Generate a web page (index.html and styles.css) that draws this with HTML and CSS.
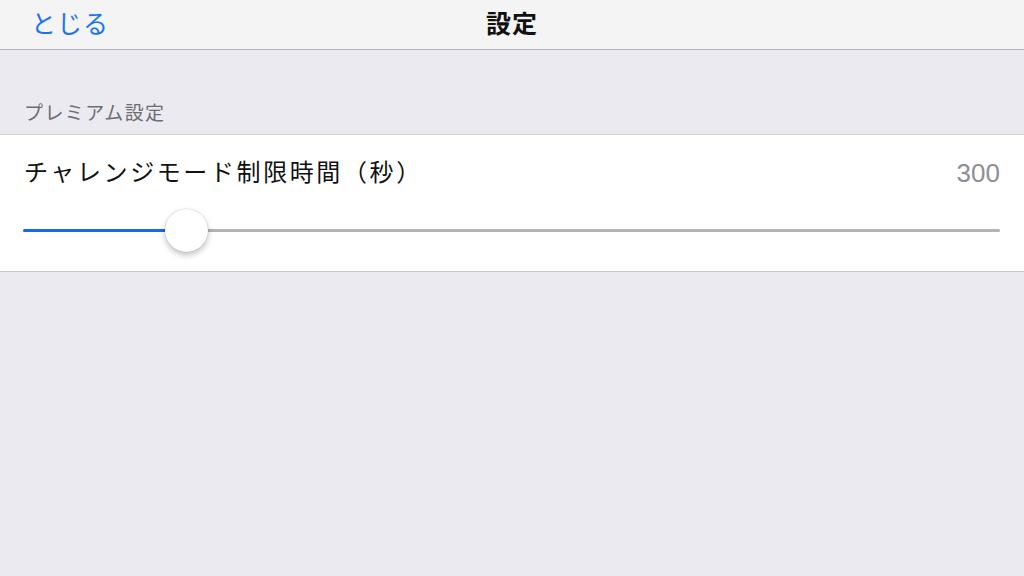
FILE: index.html
```html
<!DOCTYPE html>
<html lang="ja">
<head>
<meta charset="utf-8">
<title>設定</title>
<link rel="stylesheet" href="styles.css">
</head>
<body>
<div class="screen">
  <header class="navbar">
    <span class="nav-left">とじる</span>
    <span class="nav-title">設定</span>
    <span class="nav-right"></span>
  </header>
  <div class="section-header">プレミアム設定</div>
  <section class="cell">
    <div class="cell-row">
      <span class="cell-title">チャレンジモード制限時間（秒）</span>
      <span class="cell-value">300</span>
    </div>
    <div class="slider">
      <div class="track-fill" style="width: 161px"></div>
      <div class="thumb"></div>
      <div class="track-rest"></div>
    </div>
  </section>
</div>
</body>
</html>
```
FILE: styles.css
```css
html, body {
  margin: 0;
  padding: 0;
}
body {
  width: 1024px;
  height: 576px;
  background: #ebeaf0;
  font-family: "Noto Sans CJK JP", "Noto Sans", sans-serif;
  overflow: hidden;
}
.screen {
  display: flex;
  flex-direction: column;
}
.navbar {
  height: 49px;
  border-bottom: 1px solid #b2b2b2;
  background: #f4f4f4;
  display: grid;
  grid-template-columns: 1fr auto 1fr;
  align-items: center;
  padding: 0 32px;
  box-sizing: content-box;
}
.nav-left {
  color: #1a74f2;
  font-size: 25px;
  letter-spacing: 1px;
  line-height: 30px;
  margin-top: -6px;
  margin-left: -1px;
}
.nav-title {
  font-size: 25px;
  letter-spacing: 1px;
  line-height: 30px;
  font-weight: 700;
  color: #111;
  margin-top: -5px;
}
.section-header {
  height: 84px;
  box-sizing: border-box;
  padding: 0 0 10px 24px;
  display: flex;
  align-items: flex-end;
  font-size: 19px;
  letter-spacing: 1.4px;
  line-height: 24px;
  color: #6d6d72;
}
.cell {
  background: #fff;
  border-top: 1px solid #d0cfd4;
  border-bottom: 1px solid #c8c7cc;
  height: 136px;
  padding: 0 24px 0 23px;
}
.cell-row {
  display: flex;
  justify-content: space-between;
  align-items: center;
  padding-top: 18px;
  height: 36px;
}
.cell-title {
  font-size: 24px;
  letter-spacing: 2.6px;
  line-height: 36px;
  color: #111;
  padding-left: 1px;
}
.cell-value {
  font-family: "Liberation Sans", Arial, sans-serif;
  font-size: 26px;
  line-height: 36px;
  color: #8e8e93;
  margin-top: 4px;
}
.slider {
  display: flex;
  align-items: center;
  height: 44px;
  margin-top: 19px;
}
.track-fill {
  height: 3px;
  background: #1468f4;
  border-radius: 2px 0 0 2px;
}
.track-rest {
  flex: 1;
  height: 3px;
  background: #b3b3b3;
  border-radius: 0 2px 2px 0;
}
.thumb {
  width: 43px;
  height: 43px;
  border-radius: 50%;
  background: #fff;
  margin: 0 -3px 0 -19px;
  box-shadow: 0 0 0 0.5px rgba(0,0,0,0.12), 0 3px 6px rgba(0,0,0,0.25);
  position: relative;
  z-index: 1;
  flex: none;
}
```
